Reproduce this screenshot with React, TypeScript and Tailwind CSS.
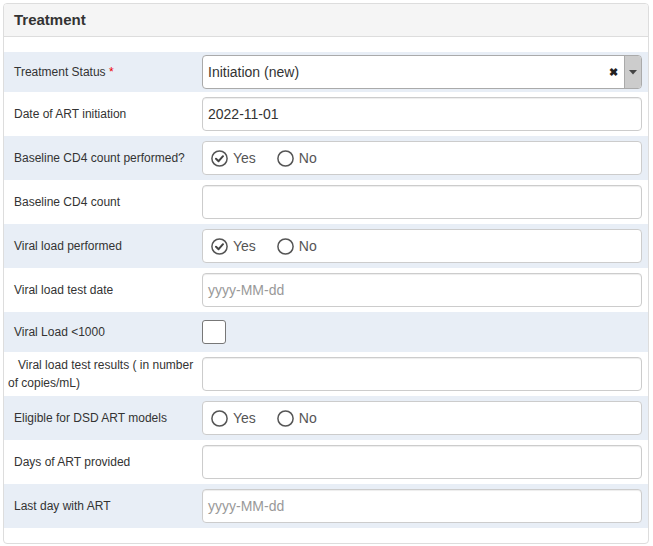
import React from "react";

const font = { fontFamily: '"Liberation Sans", Arial, sans-serif' };

const RadioIcon = ({ checked }: { checked: boolean }) => (
  <svg width="17" height="17" viewBox="0 0 17 17" className="shrink-0">
    <circle cx="8.5" cy="8.5" r="7.6" fill="none" stroke="#555" strokeWidth="1.5" />
    {checked && (
      <path d="M5 8.8 L7.6 11.2 L12 6.2" fill="none" stroke="#444" strokeWidth="2" strokeLinecap="round" strokeLinejoin="round" />
    )}
  </svg>
);

const Row = ({
  label,
  shaded,
  h = "h-[44px]",
  children,
}: {
  label: React.ReactNode;
  shaded?: boolean;
  h?: string;
  children: React.ReactNode;
}) => (
  <div className={`flex items-center ${h} ${shaded ? "bg-[#e8eef6]" : "bg-white"}`}>
    <div className="w-[198px] shrink-0 pl-[10px] pr-2 text-[12px] text-[#333] leading-[18px]">{label}</div>
    <div className="flex-1 mr-[6px]">{children}</div>
  </div>
);

const TextInput = ({ value, placeholder }: { value?: string; placeholder?: string }) => (
  <div className="h-[34px] rounded-[4px] border border-[#ccc] bg-white px-[5px] flex items-center text-[14px] shadow-[inset_0_1px_1px_rgba(0,0,0,0.075)]">
    {value ? <span className="text-[#333]">{value}</span> : <span className="text-[#999]">{placeholder}</span>}
  </div>
);

const YesNo = ({ yes }: { yes?: boolean }) => (
  <div className="h-[34px] rounded-[4px] border border-[#ccc] bg-white flex items-center pl-[8px] text-[14px] text-[#555]">
    <div className="flex items-center gap-[5px]">
      <RadioIcon checked={!!yes} />
      <span>Yes</span>
    </div>
    <div className="flex items-center gap-[5px] ml-[21px]">
      <RadioIcon checked={false} />
      <span>No</span>
    </div>
  </div>
);

export default function App() {
  return (
    <div className="bg-white min-h-[546px] pt-[3px] pl-[3px]" style={font}>
      <div className="w-[646px] border border-[#ddd] rounded-[4px] overflow-hidden bg-white">
        <div className="h-[33px] bg-[#f5f5f5] border-b border-[#ddd] flex items-center pl-[10px]">
          <h3 className="text-[15px] font-bold text-[#333]">Treatment</h3>
        </div>
        <div className="py-[15px]">
          <Row
            shaded
            h="h-[40px]"
            label={
              <>
                Treatment Status <span className="text-[#e00]">*</span>
              </>
            }
          >
            <div className="h-[34px] rounded-[4px] border border-[#aaa] bg-white flex items-center text-[14px] text-[#333] overflow-hidden">
              <span className="flex-1 pl-[5px]">Initiation (new)</span>
              <span className="text-[#222] font-bold text-[11px] mr-[6px] leading-none">✖</span>
              <div className="w-[17px] self-stretch bg-[#ccc] border-l border-[#aaa] flex items-center justify-center">
                <svg width="8" height="5" viewBox="0 0 8 5">
                  <path d="M0 0 L8 0 L4 4.5 Z" fill="#444" />
                </svg>
              </div>
            </div>
          </Row>
          <Row label="Date of ART initiation">
            <TextInput value="2022-11-01" />
          </Row>
          <Row shaded label="Baseline CD4 count performed?">
            <YesNo yes />
          </Row>
          <Row label="Baseline CD4 count">
            <TextInput />
          </Row>
          <Row shaded label="Viral load performed">
            <YesNo yes />
          </Row>
          <Row label="Viral load test date">
            <TextInput placeholder="yyyy-MM-dd" />
          </Row>
          <Row shaded h="h-[40px]" label="Viral Load <1000">
            <div className="w-[24px] h-[24px] rounded-[3px] border border-[#777] bg-white" />
          </Row>
          <div className="flex items-center h-[44px] bg-white">
            <div className="w-[198px] shrink-0 pl-[4px] pr-2 text-[12px] text-[#333] leading-[18px] indent-[10px]">
              Viral load test results ( in number of copies/mL)
            </div>
            <div className="flex-1 mr-[6px]">
              <TextInput />
            </div>
          </div>
          <Row shaded label="Eligible for DSD ART models">
            <YesNo />
          </Row>
          <Row label="Days of ART provided">
            <TextInput />
          </Row>
          <Row shaded label="Last day with ART">
            <TextInput placeholder="yyyy-MM-dd" />
          </Row>
        </div>
      </div>
    </div>
  );
}
